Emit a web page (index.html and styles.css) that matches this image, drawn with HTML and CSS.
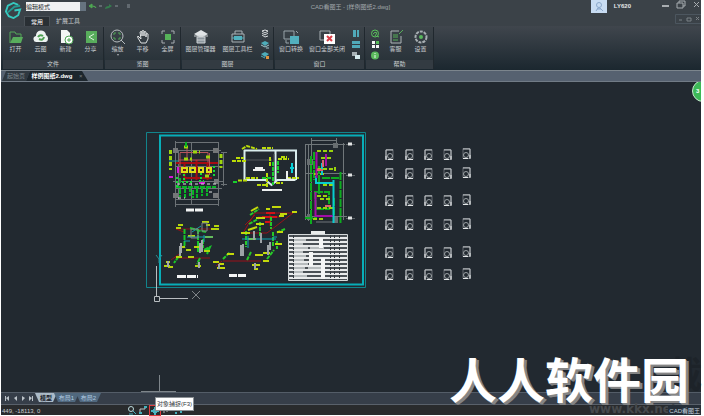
FILE: index.html
```html
<!DOCTYPE html>
<html lang="zh-CN">
<head>
    <meta charset="UTF-8">
    <meta name="viewport" content="width=device-width, initial-scale=1.0">
    <title>CAD看图王</title>
    <link rel="stylesheet" href="styles.css">
</head>
<body>
    <header class="top">
        <svg class="logo" viewBox="0 0 18 18" fill="none" stroke="#36c9bf" stroke-width="2"><path d="M14 3 9 1 3 4 1 10 4 15 9 17 14 14 16 8 10 9"/><path d="M3 11 10 5 16 4" stroke="#249891"/></svg>
        <div class="top-rows">
            <div class="titlebar">
                <select class="mode" aria-label="模式"><option>编辑模式</option></select>
                <svg class="quick" viewBox="0 0 44 9" fill="none"><path d="M1 4 4 2v4zM4 4q4 0 4 2" fill="#4fa653" stroke="#4fa653"/><path d="M11 4h3M27 4h3M39 3h3M39 5h3" stroke="#899097"/><path d="M17 7q0-3 4-3V2l3 2-3 2" fill="#367d4e"/></svg>
                <h1 class="title">CAD看图王 - [样例图纸2.dwg]</h1>
                <div class="user">
                    <svg class="avatar" viewBox="0 0 16 13"><path fill="#c8dcf2" d="M0 0h16v13H0z"/><g fill="none" stroke="#8ba8cb"><circle cx="8" cy="5" r="2.5"/><path d="M5 11l2-3h2l3 3M6 9h4"/></g></svg>
                    <span>LY620</span>
                </div>
                <svg class="win" viewBox="0 0 42 10" fill="none" stroke="#a8adb1"><path d="M3 6h7" stroke-width="2"/><path d="M18 3h6v5h-6zM20 3V1h6v5h-2M35 2l5 5M40 2l-5 5"/></svg>
            </div>
            <div class="tabs">
                <button class="tab tab-on">常用</button>
                <button class="tab">扩展工具</button>
                <svg class="mdi" viewBox="0 0 26 10" fill="none" stroke="#7b8186"><path d="M26 .5H.5v9H26" stroke="#4c565f"/><path d="M4 6h3M12 4h4v3h-4zM21 3l3 3M24 3l-3 3"/></svg>
            </div>
        </div>
    </header>

    <div class="ribbon">
        <section class="group">
            <div class="tools">
                <button class="tool w25"><svg viewBox="0 0 16 16"><path d="M2 14V3h5l1 2h5v3" fill="none" stroke="#55a95a"/><path d="M5 8h10l-2 6H2z" fill="#58ad5c"/></svg>打开</button>
                <button class="tool w25"><svg viewBox="0 0 16 16"><path d="M4 13a3 3 0 0 1-1-6 5 5 0 0 1 10-1 4 4 0 0 1 0 7z" fill="#eef3f2"/><path d="M5 8q2-3 5-1M11 8q-1 4-5 2" fill="none" stroke="#4da052" stroke-width="2"/></svg>云图</button>
                <button class="tool w25"><svg viewBox="0 0 16 16"><path d="M3 1h6l3 3v10H3z" fill="#f4f5f5"/><circle cx="11" cy="11" r="4" fill="#fff" stroke="#4fa354"/><path d="M9 11h4M11 9v4" stroke="#4fa354"/></svg>新建</button>
                <button class="tool w25"><svg viewBox="0 0 16 16"><path d="M3 2h11v12H3z" fill="#58ad5c"/><path d="M11 5 6 8l5 3" fill="none" stroke="#dff4df"/></svg>分享</button>
            </div>
            <h2 class="name">文件</h2>
        </section>
        <section class="group">
            <div class="tools">
                <button class="tool w25"><svg viewBox="0 0 16 16" fill="none"><circle cx="7" cy="7" r="6" stroke="#b7bdc0"/><path d="M11 11l4 4" stroke="#b7bdc0"/><path d="M4 6V4h2M8 4h2v2M10 8v2H8M6 10H4V8" stroke="#51a457"/></svg>缩放<i class="drop"></i></button>
                <button class="tool w25"><svg viewBox="0 0 16 16" fill="none" stroke="#dde0e1"><path d="M6 10 3 7Q2 7 3 9l3 5h5l2-4V5q-1-1-2 0v3-5q-1-1-2 0v4-5q-1-1-2 0v5-4q-1-1-2 0z"/></svg>平移</button>
                <button class="tool w25"><svg viewBox="0 0 16 16"><path d="M2 5V2h3M11 2h3v3M14 11v3h-3M5 14H2v-3" fill="none" stroke="#a7adb1"/><path d="M5 5h6v6H5z" fill="#56b359"/></svg>全屏</button>
            </div>
            <h2 class="name">览图</h2>
        </section>
        <section class="group">
            <div class="tools">
                <button class="tool w37"><svg viewBox="0 0 16 16"><path d="m8 1 7 4-7 4-7-4z" fill="#dfe3e5"/><path d="M1 7h14M4 8h8v6H4zM4 11h8" stroke="#cbd0d3" fill="#8c969d"/></svg>图层管理器</button>
                <button class="tool w37"><svg viewBox="0 0 16 16" fill="none" stroke="#a9b1b5"><path d="M5 5V2h7v3M2 5h12v8H2z"/><path d="M2 9h12" stroke="#50b1be"/><path d="M4 7h8v4H4z" fill="#50b1be" stroke="none"/></svg>图层工具栏</button>
                <div class="minis">
                    <svg viewBox="0 0 10 9"><path d="m2 2 3-1 3 1-3 2zM2 4l3 2 3-2M2 6l3 2 3-1" fill="none" stroke="#d9dcde"/></svg>
                    <svg viewBox="0 0 10 9"><path d="m1 3 4-2 4 2-4 3z" fill="#4eacb9"/><path d="m1 5 4 2 4-2M6 8h3" fill="none" stroke="#a4c6cc"/></svg>
                    <svg viewBox="0 0 10 9"><path d="m1 3 4-2 4 2-4 3z" fill="#4eacb9"/><path d="m1 5 4 2" stroke="#4eacb9"/><path d="M6 5h3v3H6z" fill="#de943f"/></svg>
                </div>
            </div>
            <h2 class="name">图层</h2>
        </section>
        <section class="group">
            <div class="tools">
                <button class="tool w32"><svg viewBox="0 0 16 16"><path d="M1 2h10v8H1zM13 2l2 2M3 11v3h3" fill="none" stroke="#98a4aa"/><path d="M7 7h9v8H7z" fill="#52b0be"/></svg>窗口转换</button>
                <button class="tool w40"><svg viewBox="0 0 16 16"><path d="M1 2h10v9H1z" fill="none" stroke="#a6aeb2"/><path d="M5 5h11v10H5z" fill="#fff"/><path d="m8 7 5 5M13 7l-5 5" stroke="#da3e48" stroke-width="2"/></svg>窗口全部关闭</button>
                <div class="minis">
                    <svg viewBox="0 0 10 9"><path d="M2 1h3v7H2zM6 1h2v7H6z" fill="#50a9b9"/></svg>
                    <svg viewBox="0 0 10 9"><path d="M1 1h8v3H1zM1 5h8v3H1z" fill="#50a9b9"/></svg>
                    <svg viewBox="0 0 10 9"><path d="M1 1h5v4H1z" fill="#a6b0b4"/><path d="M4 4h5v4H4z" fill="#d4eaed"/></svg>
                </div>
            </div>
            <h2 class="name">窗口</h2>
        </section>
        <section class="group">
            <div class="tools">
                <div class="minis">
                    <svg viewBox="0 0 10 9" fill="none" stroke="#5ac25c"><circle cx="5" cy="4.500" r="3.500"/><path d="M3 5q2-3 4-1l-2 3M7 7l2 1"/></svg>
                    <svg viewBox="0 0 10 9"><path d="M2 1h3v3H2zM2 5h3v3H2zM6 5h3v3H6z" fill="#f5f6f6"/><path d="M6 1h3v3H6z" fill="#55b958"/></svg>
                    <svg viewBox="0 0 10 9"><circle cx="5" cy="4.500" r="4" fill="#5bb95d"/><path d="M5 4v3M5 2v1" stroke="#edf7ed"/></svg>
                </div>
                <button class="tool w25"><svg viewBox="0 0 16 16" fill="none" stroke="#b0b6b9"><path d="M11 2H3v12h10V7"/><path d="M5 6h5M5 8h5M5 11h5M11 5l4-4" stroke="#56ad59"/></svg>客服</button>
                <button class="tool w25"><svg viewBox="0 0 16 16" fill="none"><circle cx="8" cy="8" r="5.500" stroke="#a8afb3" stroke-width="2" stroke-dasharray="3 1"/><circle cx="8" cy="8" r="2" fill="#58b65c"/></svg>设置</button>
            </div>
            <h2 class="name">帮助</h2>
        </section>
    </div>

    <nav class="docs">
        <button class="doc">起始页</button>
        <button class="doc doc-on">样例图纸2.dwg <span class="x">×</span></button>
    </nav>

    <main class="canvas">
        <svg class="drawing" viewBox="1 82 700 310" preserveAspectRatio="xMinYMin meet" fill="none">
            <defs>
                <g id="chair">
                    <path d="M1 .5h7v10H1z" stroke="#646b70"/>
                    <path d="M1 1v9M1 1h7" stroke="#c5c9cb"/>
                    <circle cx="5" cy="7" r="2.500" stroke="#9da3a6"/>
                    <path d="M3 10.500h5M1 7v4" stroke="#e4e7e8"/>
                </g>
                <g id="chairs">
                    <use href="#chair" x="385"/>
                    <use href="#chair" x="405"/>
                    <use href="#chair" x="424"/>
                    <use href="#chair" transform="translate(452) scale(-1 1)"/>
                    <use href="#chair" transform="translate(471 -1) scale(-1 1)"/>
                </g>
            </defs>

            <!-- sheet frame -->
            <path d="M146.500 132.500h219v155h-219z" stroke="#12848c"/>
            <path d="M160 135.500h203v149H160z" stroke="#08aeb8" stroke-width="2"/>

            <!-- floor plan -->
            <g>
                <path d="M175 142.500h44M175 150.500h46M176 166.500h44M173 181.500h50M176 188.500h46M175 199.500h45M175 204.500h44M175.500 141v66M178.500 150v50M191.500 142v62M218.500 142v64M223.500 152v34M221 152.500h6M221 184.500h6" stroke="#6c7276"/>
                <path d="M173 148h5v5h-5zM213 148h6v5h-6zM173 193h5v5h-5zM213 193h6v5h-6zM214 179h5v5h-5z" fill="#747779"/>
                <path d="M176 163h42M184 178h28M184.500 164v17M196.500 160v20M207.500 164v16" stroke="#a50c13" stroke-width="2"/>
                <path d="M180 152.500h28v10M179 160h30M180 153v22M209.500 153v22M187 146v12" stroke="#b7555c"/>
                <path d="M182 168h5v4h-5zM190 168h5v4h-5zM199 168h4v4h-4zM207 168h4v4h-4z" stroke="#dddf16" stroke-width="2"/>
                <path d="M184 147h5M193 152h7M184 159h8M170.500 150v20M206 157h5M221 154v14M205 176h4" stroke="#9ed60c" stroke-width="3" stroke-dasharray="4 2"/>
                <path d="M176 187h40M180 189v8M185 188v10M190 187v9M197 188v10M202 188v8M207 187v9M193 190v8M180 178v6M186 142v6" stroke="#08b525" stroke-width="2" stroke-dasharray="5 1"/>
                <path d="M177 177v10M182 182h10M199 181h5M214 166v10M184 174v8M201 173v6" stroke="#16db37" stroke-width="2" stroke-dasharray="2 2"/>
                <path d="M169 177h4M178 167v6M199 183h6" stroke="#d517d8" stroke-width="2"/>
                <path d="M169 161h9" stroke="#159f9e"/>
                <path d="M177 184h40M178 198h7M209 192h6" stroke="#dde1e1" stroke-dasharray="3 3"/>
                <path d="M186 210h18" stroke="#f2f4f4" stroke-width="3" stroke-dasharray="8 1"/>
            </g>

            <!-- section -->
            <g>
                <path d="M244 150.500h52V180M244.500 150v30h21l6 5 6-5h18M275.500 150v33" stroke="#d9eded" stroke-width="2"/>
                <path d="M246 160h26M274 154v22" stroke="#52585d"/>
                <path d="M232 161h14M236 158h8M238 180.500h10M242 149l5-3 10 3M262 148h11M278 159h11M281 157h6M257 185h11M276 183h7M267 173v15M270 157v10M246 178h12M287 178h12" stroke="#badc08" stroke-width="2" stroke-dasharray="4 1"/>
                <path d="M273 162v23M278 161v12M262 178h12M233 182h5" stroke="#18cf2c" stroke-width="2" stroke-dasharray="4 1"/>
                <path d="M292 163v10M290 168h4" stroke="#06d1d9" stroke-width="2"/>
                <path d="M287 171v8l7 1M253 170h12M255 168h8M262 190h20" stroke="#edf0f0" stroke-width="2"/>
            </g>

            <!-- long plan -->
            <g>
                <path d="M311 140.500h26M305 144.500h40M311.500 138v85M336.500 138v8M343.500 143v77M305.500 144v76M308.500 145v76M305 173.500h41M305 216.500h42M316 222h22" stroke="#70777a"/>
                <path d="M307 159h6v6h-6zM333 143h5v5h-5zM307 214h5v6h-5zM333 217h5v6h-5z" fill="#686e71"/>
                <path d="M311 156v68M314 152v28M305 218h12M340.500 172v51M322 178h18M315 192h14v17h-13zM319 166v28M334 198v18" stroke="#0dac1f" stroke-width="2" stroke-dasharray="8 1"/>
                <path d="M317 151h16M321 158h10M317 169h18M314 174h12M317 196h12M320 199h10M317 208h16M313 219h12M323 185h11M335 167v5" stroke="#9ad40c" stroke-width="2" stroke-dasharray="4 2"/>
                <path d="M322 163v12M316 183h17M333.500 180v43M316 176v8" stroke="#08cbd1" stroke-width="2"/>
                <path d="M316.500 152v26M315.500 192v24h17M326 154v12" stroke="#a10ea5" stroke-width="2"/>
                <path d="M317 170h6M325 206h6M323 160v7" stroke="#dd6370" stroke-width="2"/>
                <path d="M346 144.500h9M346 175.500h9M346 218.500h9" stroke="#5f666a"/>
                <path d="M348 144h4M348 175h4M348 218h4" stroke="#e1e4e4" stroke-width="3"/>
            </g>

            <!-- left riser diagram -->
            <g>
                <path d="M176 229h40M175 258h35M176 229l8 3M171 260l11-8" stroke="#8f1118"/>
                <path d="M184.500 229v19M198 229v23M203 239v9M190 228l16 4M179 256l-5 7M200 258l-3 6M204 250l6-3-3 7" stroke="#18c729" stroke-width="2" stroke-dasharray="5 1"/>
                <path d="M178 225h5M176 228h5M202 222h7M211 229h8M205 237h8M188 236h7M194 247h7M186 250h5M179 247h6M164 266h6M166 262h4M176 257h6M195 266h6M204 251h6M188 257h6M168 267h5M214 226h5M206 225h4" stroke="#b4d40d" stroke-width="2"/>
                <path d="M187 237h26M192 232l9-6M184 241h6M204 235v7" stroke="#14a2ad"/>
                <path d="M191 229h7v9h-7zM202 223h5v8h-5z" stroke="#7f878b"/>
                <path d="M181 243v10M180 246v10M200 243v10M202 240v12M168 261v6M199 262v6" stroke="#a3a8ab" stroke-width="2"/>
                <path d="M177 276.500h21" stroke="#f3f5f5" stroke-width="3" stroke-dasharray="9 1"/>
            </g>

            <!-- right riser diagram -->
            <g>
                <path d="M255 213h38l-26 20h-24zM270 212v14M258 217h22M223 261h38M222 261l-6 5M245 225l10-10" stroke="#9a1018"/>
                <path d="M266 213h9M262 217h15M265 222h6" stroke="#d51117" stroke-width="2"/>
                <path d="M250 215l9-6M249 224l9-5M260 222v14M271 217v12M246 231v16M273 232v15M277 241v8M223 259l7-7M251 252l-4 8M267 259l7-9M285 229l-9 4" stroke="#27c928" stroke-width="2" stroke-dasharray="4 1"/>
                <path d="M251 211l7-4M256 218h9M256 224h8M272 207h9M280 214h7M292 212h5M257 227l-9 3M241 233h9M277 232h6M248 239h8M275 244h7M263 253h7M255 255h8M217 268h8M219 264h5M227 254h7M252 265h8M254 269h4M263 261h6M213 262h6M279 216h5M266 209h4" stroke="#c3d90b" stroke-width="2"/>
                <path d="M242 239h34M248 236v12M273 237h4" stroke="#10a8b5"/>
                <path d="M254 231v9M261 233v10M241 245v11M243 244v12M268 245v10M270 242v8M255 263v6M219 264v5" stroke="#9da3a6" stroke-width="2"/>
                <path d="M229 275.500h18" stroke="#f3f5f5" stroke-width="3" stroke-dasharray="8 1"/>
            </g>

            <!-- parts list -->
            <g>
                <path d="M311 232.500h14" stroke="#e8ebeb" stroke-width="3"/>
                <path d="M288.500 234.500h59v46h-59z" fill="#4b5156" stroke="#d5d9da"/>
                <path d="M289 238h58M289 242h58M289 246h58M289 250h58M289 254h58M289 258h58M289 262h58M289 266h58M289 270h58M289 274h58M289 278h58" stroke="#e9ebec" stroke-width="2"/>
                <path d="M294 240h12M294 244h9M294 248h14M294 252h9M294 256h12M294 260h10M294 264h14M294 268h11M294 272h9M294 276h13M310 248h14M308 268h14" stroke="#b6bbbd" stroke-width="2"/>
                <path d="M293.500 235v45M330.500 235v45M334.500 235v45M339.500 235v45" stroke="#343a40" stroke-dasharray="3 1"/>
                <path d="M321 238v10M323 258v21M311 252v14" stroke="#f5f6f6" stroke-width="4"/>
            </g>

            <use href="#chairs" y="149"/>
            <use href="#chairs" y="168"/>
            <use href="#chairs" y="195"/>
            <use href="#chairs" y="219"/>
            <use href="#chairs" y="247"/>
            <use href="#chairs" y="269"/>

            <!-- axes and cursor -->
            <path d="M156.500 266v30M154.500 296.500h5v5h-5zM159 298.500h29" stroke="#b9bec1"/>
            <path d="M192 291l8 8M200 291l-8 8" stroke="#7e8488"/>
            <path d="M156 255l3 4 3-4M159 259v4" stroke="#278e95"/>
            <path d="M159.500 375v17M141 391.500h35" stroke="#7e858a"/>
        </svg>
        <button class="bubble">3</button>
    </main>

    <nav class="layouts">
        <svg class="arrows" viewBox="0 0 34 11" fill="#bcc3c9"><path d="M4 3h1v5H4zM8 3v5L5 5zM16 3v5l-3-3zM21 3v5l3-3zM28 3v5l3-3zM31 3h1v5h-1z"/></svg>
        <button class="layout layout-on">模型</button>
        <button class="layout">布局1</button>
        <button class="layout">布局2</button>
    </nav>

    <footer class="status">
        <span class="coords">449, -18113, 0</span>
        <div class="snaps">
            <svg viewBox="0 0 10 10" fill="none" stroke="#bad8dc"><circle cx="4" cy="4" r="2.500"/><path d="m6 6 3 3M2 9h4" stroke="#43afbb"/></svg>
            <svg viewBox="0 0 10 10"><path d="M2 8V4h5V2" fill="none" stroke="#bfc5c8"/><path d="M1 7h3v2H1zM6 1h3v2H6z" fill="#43afbb"/></svg>
            <button class="snap"><svg viewBox="0 0 10 10"><path d="M5 1v8M1 5h8" stroke="#49b5c1" stroke-width="2"/><path d="m3 3 4 4M7 3 3 7" stroke="#49b5c1"/></svg><span class="tip">对象捕捉(F3)</span></button>
            <svg viewBox="0 0 10 10"><path d="M2 8V3h6M5 3v4" fill="none" stroke="#aeb4b7"/></svg>
            <svg viewBox="0 0 10 10"><path d="M2 4h6v4M2 8h2" fill="none" stroke="#43afbb" stroke-width="2"/></svg>
        </div>
        <span class="brand">CAD看图王</span>
    </footer>

    <div class="mark">
        <span class="mark-back">载</span>
        <span class="mark-url">www.kkx.net</span>
        <strong class="mark-name">人人软件园</strong>
    </div>
</body>
</html>
```
FILE: styles.css
```css
* {
    box-sizing: border-box;
}

body {
    margin: 0;
    padding: 0 3px 1px 1px;
    height: 100vh;
    display: flex;
    flex-direction: column;
    overflow: hidden;
    position: relative;
    background: #fff;
    color: #c9cdd0;
    font-family: "Liberation Sans", "Noto Sans CJK SC", sans-serif;
    font-size: 6px;
    line-height: 8px;
}

button, select {
    font: inherit;
    color: inherit;
    border: 0;
    margin: 0;
    padding: 0;
    background: none;
    cursor: pointer;
}

h1, h2 {
    margin: 0;
    font-size: 6px;
    font-weight: normal;
}

svg {
    display: block;
    flex: none;
}

/* title bar */
.top {
    display: flex;
    height: 26px;
    flex: none;
    padding-left: 4px;
    background: #3b4248;
}

.logo {
    width: 17px;
    height: 17px;
    margin-top: 2px;
}

.top-rows {
    flex: 1;
    display: flex;
    flex-direction: column;
}

.titlebar {
    display: flex;
    height: 14px;
    padding-left: 4px;
}

.mode {
    appearance: none;
    width: 60px;
    height: 9px;
    margin-top: 2px;
    background: linear-gradient(to right, #f1f2f3 54px, #66737f 54px);
    color: #23282c;
}

.quick {
    width: 44px;
    height: 9px;
    margin: 2px 0 0 2px;
}

.title {
    flex: 1;
    padding: 3px 22px 0 0;
    text-align: center;
    color: #a1a6aa;
}

.user {
    display: flex;
    gap: 7px;
    color: #e6e8e9;
    font-weight: bold;
}

.user span {
    padding-top: 2px;
}

.avatar {
    width: 16px;
    height: 13px;
}

.win {
    width: 42px;
    height: 10px;
    margin-left: 28px;
}

.tabs {
    display: flex;
    height: 12px;
    padding-left: 2px;
}

.tab {
    height: 10px;
    margin-top: 2px;
    padding: 0 6px;
}

.tab-on {
    background: #292f34;
    border: 1px solid #4a5157;
    border-bottom: 0;
    color: #fff;
    line-height: 8px;
}

.mdi {
    width: 26px;
    height: 10px;
    margin-left: auto;
}

/* ribbon */
.ribbon {
    display: flex;
    gap: 1px;
    height: 44px;
    flex: none;
    padding: 1px 2px;
    background: linear-gradient(#40464d, #1b272f);
}

.group {
    border-right: 1px solid #20282e;
    background: linear-gradient(#3c4349, #252f36);
}

.tools {
    display: flex;
    height: 33px;
}

.tool {
    display: flex;
    flex-direction: column;
    align-items: center;
    padding-top: 2px;
    white-space: nowrap;
}

.tool svg {
    width: 16px;
    height: 16px;
}

.drop {
    border: 1px solid transparent;
    border-top: 2px solid #aab0b4;
    margin-top: 1px;
}

.w25 { width: 25px; }
.w32 { width: 32px; }
.w37 { width: 37px; }
.w40 { width: 40px; }

.minis {
    width: 17px;
    display: flex;
    flex-direction: column;
    align-items: center;
    gap: 2px;
    padding-top: 2px;
}

.minis svg {
    width: 10px;
    height: 9px;
}

.name {
    height: 9px;
    background: #333b42;
    text-align: center;
}

/* open files */
.docs {
    display: flex;
    height: 12px;
    flex: none;
    padding-left: 1px;
    border-top: 1px solid #7c858d;
    border-bottom: 1px solid #717b86;
    background: #566170;
}

.doc {
    width: 28px;
    height: 10px;
    background: #303941;
    color: #7e878e;
    clip-path: polygon(4px 0, 100% 0, 24px 100%, 0 100%);
}

.doc-on {
    width: 62px;
    margin-left: -4px;
    background: #1d262d;
    color: #fff;
    font-weight: bold;
    white-space: nowrap;
    clip-path: polygon(4px 0, 56px 0, 100% 100%, 0 100%);
}

.x {
    margin-left: 5px;
    color: #7a838a;
    font-weight: normal;
}

/* drawing area */
.canvas {
    flex: 1;
    min-height: 0;
    position: relative;
    overflow: hidden;
    background: #222930;
}

.drawing {
    width: 700px;
    height: 310px;
}

.bubble {
    position: absolute;
    top: -2px;
    right: -13px;
    width: 22px;
    height: 22px;
    padding-left: 3px;
    border: 1px solid #c8e9cf;
    border-radius: 50%;
    background: #3db957;
    color: #fff;
    font-weight: bold;
    text-align: left;
}

/* model and layout tabs */
.layouts {
    display: flex;
    height: 12px;
    flex: none;
    border-top: 1px solid #545d68;
    background: #363e49;
}

.arrows {
    width: 34px;
    height: 11px;
}

.layout {
    width: 25px;
    height: 9px;
    margin-right: -3px;
    background: #50687e;
    color: #b1cbe2;
    clip-path: polygon(0 0, 100% 0, 21px 100%, 4px 100%);
}

.layout-on {
    width: 22px;
    background: #abbac7;
    color: #17202a;
    font-weight: bold;
    clip-path: polygon(0 0, 100% 0, 18px 100%, 4px 100%);
}

/* status bar */
.status {
    display: flex;
    height: 11px;
    flex: none;
    border-top: 1px solid #59616b;
    background: #292b2d;
}

.coords {
    width: 126px;
    padding: 2px 0 0 1px;
}

.snaps {
    display: flex;
    gap: 1px;
}

.snaps svg {
    width: 10px;
    height: 10px;
}

.snap {
    position: relative;
    width: 12px;
    height: 11px;
    border: 1px solid #e03b3f;
}

.tip {
    position: absolute;
    left: 5px;
    bottom: 4px;
    z-index: 2;
    padding: 2px 1px;
    border: 1px solid #8c9195;
    background: #fff;
    color: #30363b;
    white-space: nowrap;
}

.brand {
    margin-left: auto;
    padding: 2px 1px 0;
    background: #252e38;
    color: #c2d1dd;
    z-index: 1;
}

/* watermark over the corner */
.mark {
    position: absolute;
    right: 0;
    bottom: 0;
    width: 256px;
    height: 72px;
    pointer-events: none;
}

.mark-back {
    position: absolute;
    right: 2px;
    bottom: 20px;
    color: #1d2329;
    font-size: 36px;
    font-weight: bold;
    line-height: 40px;
}

.mark-url {
    position: absolute;
    left: 141px;
    bottom: 0;
    color: #46494c;
    font-family: "DejaVu Sans", sans-serif;
    font-size: 12px;
    font-weight: bold;
    line-height: 14px;
}

.mark-name {
    position: absolute;
    left: 1px;
    bottom: 6px;
    color: #fff;
    font-size: 48px;
    line-height: 56px;
    white-space: nowrap;
    text-shadow: 1px 1px #858585, 2px 2px #858585, 3px 2px #858585;
}
```
